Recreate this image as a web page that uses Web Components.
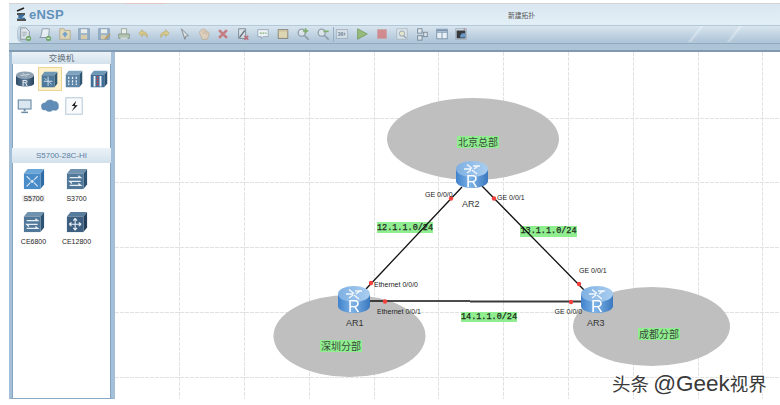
<!DOCTYPE html>
<html>
<head>
<meta charset="utf-8">
<title>eNSP</title>
<style>
  html, body { margin: 0; background: #fff; }
  body { width: 780px; height: 405px; overflow: hidden; font-family: "Liberation Sans", "Noto Sans CJK SC", sans-serif; }
  water-mark b { font: 22.500px "Liberation Sans", sans-serif; }
</style>
</head>
<body>
<ensp-app>
  <ensp-header slot="header" title-text="新建拓扑"></ensp-header>
  <ensp-toolbar slot="toolbar"></ensp-toolbar>
  <ensp-sidebar slot="side">
    <device-group title-text="交换机" tall>
      <device-item kind="router"></device-item>
      <device-item kind="switchSel" selected></device-item>
      <device-item kind="wlan"></device-item>
      <device-item kind="firewall"></device-item>
      <device-item kind="pc"></device-item>
      <device-item kind="cloud"></device-item>
      <device-item kind="link"></device-item>
    </device-group>
    <device-group title-text="S5700-28C-HI" models>
      <device-item kind="s5700" label="S5700" hilite></device-item>
      <device-item kind="s3700" label="S3700"></device-item>
      <device-item kind="ce6800" label="CE6800"></device-item>
      <device-item kind="ce12800" label="CE12800"></device-item>
    </device-group>
  </ensp-sidebar>
  <topo-canvas slot="main">
    <topo-tag x="457" y="136" w="42" h="11.5" zone>北京总部</topo-tag>
    <topo-tag x="320" y="339.5" w="42" h="12" zone>深圳分部</topo-tag>
    <topo-tag x="638" y="328" w="42" h="11.5" zone>成都分部</topo-tag>
    <topo-tag x="377" y="222" w="56" h="11">12.1.1.0/24</topo-tag>
    <topo-tag x="520" y="225.5" w="57" h="11">13.1.1.0/24</topo-tag>
    <topo-tag x="461" y="311.5" w="56" h="10.5">14.1.1.0/24</topo-tag>
    <topo-links></topo-links>
    <topo-router x="456" y="161"></topo-router>
    <topo-router x="338" y="286"></topo-router>
    <topo-router x="581" y="286"></topo-router>
    <port-label x="425" y="193.5">GE 0/0/0</port-label>
    <port-label x="497" y="197">GE 0/0/1</port-label>
    <port-label x="374" y="284">Ethernet 0/0/0</port-label>
    <port-label x="377" y="311">Ethernet 0/0/1</port-label>
    <port-label x="579" y="270">GE 0/0/1</port-label>
    <port-label x="554.5" y="311">GE 0/0/0</port-label>
    <port-label x="462" y="203.5" name>AR2</port-label>
    <port-label x="346" y="323" name>AR1</port-label>
    <port-label x="587" y="323" name>AR3</port-label>
    <water-mark x="612" y="383">头条 <b>@Geek</b>视界</water-mark>
  </topo-canvas>
</ensp-app>

<script>
const ORIGIN_X = 115, ORIGIN_Y = 52;

// 16x16 toolbar glyphs
const TOOL_ICONS = {
  newTopo: `<path d="M3 1h6l4 4v9H3z" fill="#e4e8ea" stroke="#6d7c86"/><path d="M5 6h5M5 8h5M5 10h3" stroke="#8a98a2"/><circle cx="12" cy="13" r="3" fill="#4fa52e"/><path d="M10.5 13h3" stroke="#fff"/>`,
  newPaper: `<path d="M5 2h8l-1 10H2l1.5-2z" fill="#f1f5f8" stroke="#6d8598"/><path d="M2 12h9" stroke="#6d8598"/><circle cx="12" cy="13" r="3" fill="#4fa52e"/><path d="M10.5 13h3" stroke="#fff"/>`,
  open: `<path d="M2 2h5l1 2h6v10H2z" fill="#ecd69b" stroke="#b49a5c"/><path d="M8 5l3 3-3 4-3-4z" fill="#4f93d2"/>`,
  save: `<rect x="2" y="2" width="12" height="12" fill="#7fa7cd" stroke="#6288ad"/><rect x="4.5" y="2.5" width="7" height="4.5" fill="#f4f2e6"/><rect x="4.5" y="9" width="7" height="5" fill="#e4c987"/>`,
  saveAs: `<rect x="2" y="2" width="12" height="12" fill="#7fa7cd" stroke="#6288ad"/><rect x="4.5" y="2.5" width="7" height="4.5" fill="#f4f2e6"/><rect x="4.5" y="9" width="6" height="5" fill="#e4c987"/><path d="M9 14l6-6" stroke="#c48a22" stroke-width="2"/>`,
  print: `<rect x="5" y="2" width="6" height="6" fill="#f6f6ee" stroke="#7f9a6a"/><rect x="2" y="8" width="12" height="5" fill="#a9c29a" stroke="#74866a"/><rect x="4" y="12" width="8" height="2" fill="#d8dcd4"/>`,
  undo: `<path d="M6 3L2 7l4 4V8.5c3 0 4.5.8 5.500 3.500 1-4-1-6.500-5.500-6.800z" fill="#e9c64f" stroke="#b1902f" stroke-width=".7"/>`,
  redo: `<path d="M10 3l4 4-4 4V8.500c-3 0-4.500.8-5.500 3.500-1-4 1-6.500 5.500-6.800z" fill="#e9c64f" stroke="#b1902f" stroke-width=".7"/>`,
  pointer: `<path d="M5 2l8 8-3 .5-1 3.500z" fill="#e3e5e6" stroke="#5f666c"/>`,
  hand: `<path d="M3 7V5l1.500-.5L5 3l2-1 2 1 1.500.500L11 6l2-.5L14 7l-2 7H6z" fill="#eccda6" stroke="#c39a6c" stroke-width=".8"/><path d="M7 4v4M9 4v4M11 6v3" stroke="#c39a6c" stroke-width=".7"/>`,
  del: `<path d="M3.500 3.500l9 9M12.500 3.500l-9 9" stroke="#e0585a" stroke-width="3"/>`,
  clear: `<path d="M3 2h8v11H3z" fill="#dfe5ea" stroke="#55687a"/><path d="M4 12l6-8" stroke="#3f4f5f" stroke-width="1.500"/><path d="M9.500 10l4.500 4.500M14 10l-4.500 4.500" stroke="#d9404a" stroke-width="1.800"/>`,
  note: `<path d="M2 3h12v8H8l-2 2.500V11H2z" fill="#f7fafc" stroke="#7f99ae"/><path d="M4.500 7h2M7.500 7h2M10.500 7h1.500" stroke="#55a82e" stroke-width="1.400"/>`,
  rect: `<rect x="2.500" y="3" width="11" height="10" fill="#e9d591" stroke="#6f664a"/><path d="M3 4.500h10" stroke="#c8ad63"/>`,
  zoomIn: `<circle cx="6.500" cy="6.500" r="4" fill="#dfe8ee" stroke="#7c909e" stroke-width="1.500"/><path d="M9.500 9.500l5 5" stroke="#7c909e" stroke-width="2"/><path d="M11 1.500v6M8 4.500h6" stroke="#5aa52c" stroke-width="2"/>`,
  zoomOut: `<circle cx="6.500" cy="6.500" r="4" fill="#dfe8ee" stroke="#7c909e" stroke-width="1.500"/><path d="M9.500 9.500l5 5" stroke="#7c909e" stroke-width="2"/><path d="M8.500 5h6" stroke="#5aa52c" stroke-width="2"/>`,
  cli: `<rect x="1.500" y="3" width="13" height="10" fill="#d9e1e8" stroke="#93a6b6"/><path d="M3.500 6.500h2v3h-2M7 6.500h2v3H7zM11 6.500v3" fill="none" stroke="#4c6a88"/>`,
  play: `<path d="M3 2l11 6-11 6z" fill="#7cb63f" stroke="#5c8f2b"/>`,
  stop: `<rect x="3" y="3" width="10" height="10" fill="#ee6a6c" stroke="#dc8d8d"/>`,
  capture: `<rect x="2" y="2" width="12" height="12" fill="#dde5ec" stroke="#a3b3c0"/><circle cx="8" cy="7.500" r="3" fill="#f3e9b8" stroke="#7c909e"/><path d="M10 10l3 3" stroke="#7c909e" stroke-width="1.500"/>`,
  nodes: `<rect x="3" y="2" width="5" height="5" fill="#e4ebf1" stroke="#586c7e"/><rect x="3" y="10" width="5" height="5" fill="#e4ebf1" stroke="#586c7e"/><rect x="10" y="6" width="4" height="5" fill="#e4ebf1" stroke="#586c7e"/><path d="M8 5l2 2M8 11l2-1" stroke="#586c7e"/>`,
  table: `<rect x="2" y="2.500" width="12" height="11" fill="#f4f8fb" stroke="#527ba6"/><path d="M2 6h12M8 6v7.500" stroke="#527ba6"/><path d="M2 4h12" stroke="#527ba6" stroke-width="2"/>`,
  term: `<rect x="2" y="2" width="12" height="12" fill="#d6e2ec" stroke="#8aa0b4"/><rect x="3" y="4" width="10" height="9" fill="#060606"/><path d="M7 10l2-3h4v5H7z" fill="#3b86d6"/><path d="M11 2.500h2" stroke="#e0303a"/>`
};

const boxIcon = (front, top, side, inner) => `
  <path d="M19 6l4-5v17l-4 5z" fill="${side}"/>
  <path d="M1 6l4-5h18l-4 5z" fill="${top}"/>
  <rect x="1" y="6" width="18" height="17" fill="${front}"/>
  ${inner}`;

const ARROWS = `<path d="M4 10.500h12l-2.500-2M16 14.500H4l2.500 2.500M4 19h12l-2.500-2" fill="none" stroke="#e8f0f7" stroke-width="1.400"/>`;
const CROSS = `<path d="M10 8v13M3.500 14.500h13M10 8l-2 2.500M10 8l2 2.500M10 21l-2-2.500M10 21l2-2.500M3.500 14.500l2.500-2M3.500 14.500l2.500 2M16.500 14.500l-2.500-2M16.500 14.500l-2.500 2" fill="none" stroke="#e8f0f7" stroke-width="1.200"/>`;

const DEVICE_ICONS = {
  router: `<defs><linearGradient id="gr" x1="0" x2="1"><stop offset="0" stop-color="#2e4a66"/><stop offset=".5" stop-color="#5f7f9c"/><stop offset="1" stop-color="#28425c"/></linearGradient></defs>
    <path d="M0 7v11c0 2.500 5 4 12 4s12-1.500 12-4V7z" fill="url(#gr)"/><ellipse cx="12" cy="7" rx="12" ry="5" fill="#8fa2b3"/><path d="M6 7h5M13 6h5M9 4l5 5" stroke="#e4ecf2"/><text x="12" y="21" font-size="11" text-anchor="middle" fill="#fff" font-family="Liberation Sans">R</text>`,
  switchSel: boxIcon("#4d7a9c", "#6f98b5", "#2f5672", `<path d="M10 8v13M4 14.500h12" stroke="#dfeaf2" stroke-width="1.300"/><path d="M5 10l3 3M15 19l-3-3" stroke="#dfeaf2" stroke-width="1.200"/>`),
  wlan: boxIcon("#5c85a8", "#7da3bf", "#2f5672", `<path d="M5 9v11M10 9v11M15 9v11" stroke="#eef4f8" stroke-width="1.600" stroke-dasharray="3 1.500"/>`),
  firewall: boxIcon("#3f6f99", "#6d97b6", "#2a4f70", `<path d="M6 8v14M14 8v14" stroke="#eef4f8" stroke-width="2.500"/><path d="M10 8v14" stroke="#d8404a" stroke-width="2.200" stroke-dasharray="2 1.500"/>`),
  pc: `<rect x="3" y="4" width="17" height="12" fill="#dbe7f0" stroke="#6c8ba6" stroke-width="1.500"/><path d="M11.500 16v3" stroke="#6c8ba6" stroke-width="2.500"/><path d="M7 20.500h9" stroke="#6c8ba6" stroke-width="2"/>`,
  cloud: `<path d="M1 14c-2-3 1-7 5-6 1-5 9-5 11-2 5-1 7 4 6 7 1 4-4 6-7 4-2 3-8 3-10 0-3 1-6-1-5-3z" fill="#5f8db7" stroke="#4c779e" stroke-width=".6"/>`,
  link: `<rect x="1" y="1" width="22" height="22" fill="#f8fafb" stroke="#bcd0e0" stroke-width="1.500"/><path d="M15 5l-6 7h4l-4 7 8-8h-4z" fill="#161616"/>`,
  s5700: boxIcon("#4a8cc8", "#6ba6d8", "#2f6ba4", `<path d="M4 9l4 4M16 9l-4 4M4 20l4-4M16 20l-4-4" stroke="#d3e6f5" stroke-width="1.300"/><circle cx="10" cy="14.500" r="1.800" fill="#d3e6f5"/>`),
  s3700: boxIcon("#517799", "#6f92ae", "#2d5474", ARROWS),
  ce6800: boxIcon("#517799", "#6f92ae", "#2d5474", ARROWS),
  ce12800: boxIcon("#3e5f80", "#577b9b", "#233f5c", CROSS)
};

class EnspApp extends HTMLElement {
  constructor() {
    super();
    this.attachShadow({ mode: "open" }).innerHTML = `
      <style>
        :host { display: flex; flex-direction: column; width: 771px; height: 396px; margin: 3px 0 0 9px; box-sizing: border-box; }
        .topline { height: 1px; flex: none; background: linear-gradient(90deg, #d4d4d4 115px, #e6c4c4 115px, #e6c4c4 156px, #d4d4d4 156px); }
        .band { height: 9px; flex: none; box-sizing: border-box; border-top: 1px solid #8fa9bf; border-bottom: 2px solid #7f9ab1; background: #adc3d6; }
        .body { flex: 1; display: flex; min-height: 0; }
      </style>
      <div class="topline"></div>
      <slot name="header"></slot>
      <slot name="toolbar"></slot>
      <div class="band"></div>
      <div class="body"><slot name="side"></slot><slot name="main"></slot></div>`;
  }
}

class EnspHeader extends HTMLElement {
  constructor() {
    super();
    this.attachShadow({ mode: "open" }).innerHTML = `
      <style>
        :host { display: flex; align-items: center; height: 21px; padding-left: 6px; background: linear-gradient(#d9e7f1, #e3eff6); color: #6a6a6a; }
        svg { width: 13px; height: 15px; margin-right: 1px; flex: none; filter: blur(.3px); }
        .logo { font: bold 13px "Liberation Sans", sans-serif; color: #6291ba; width: 35px; letter-spacing: .2px; }
        .title { margin-left: 444px; font: 6.750px "Noto Sans CJK SC", sans-serif; color: #555; }
      </style>
      <svg viewBox="0 0 13 15"><path d="M2 4l7-3M2 7h8" stroke="#222" stroke-width="1.600"/><path d="M3 9l6-1-5 3 6 .5" fill="none" stroke="#3a6fa0" stroke-width="1.500"/><path d="M2 13h9" stroke="#222" stroke-width="1.500"/></svg>
      <span class="logo">eNSP</span>
      <span class="title">${this.getAttribute("title-text")}</span>`;
  }
}

class EnspToolbar extends HTMLElement {
  constructor() {
    super();
    const names = Object.keys(TOOL_ICONS);
    const buttons = names.map((n, i) =>
      (i === 16 ? `<i class="sep"></i>` : "") +
      `<span class="btn"><svg viewBox="0 0 16 16" width="14" height="14">${TOOL_ICONS[n]}</svg></span>`).join("");
    this.attachShadow({ mode: "open" }).innerHTML = `
      <style>
        :host { display: block; height: 18px; background: #dfecf4; }
        .bar { display: flex; align-items: center; height: 100%; box-sizing: border-box; margin-left: 8px; border-radius: 6px 0 0 6px; border: 1px solid #b3c8d9; border-right: 0;
               background: linear-gradient(128deg, transparent 88%, rgba(255,255,255,.35) 88.300%, transparent 88.700%, transparent 93%, rgba(255,255,255,.35) 93.300%, transparent 93.700%), linear-gradient(#d8e5ef, #aec4d7); }
        .btn { width: 19.850px; flex: none; display: flex; justify-content: center; }
        .btn:first-child { margin-left: -3px; }
        .sep { width: 1px; height: 15px; margin-right: -1px; flex: none; background: #95aec3; }
        svg { filter: saturate(.75) opacity(.75) blur(.35px); }
      </style>
      <div class="bar">${buttons}</div>`;
  }
}

class EnspSidebar extends HTMLElement {
  constructor() {
    super();
    this.attachShadow({ mode: "open" }).innerHTML = `
      <style>
        :host { display: flex; flex-direction: column; width: 106px; flex: none; box-sizing: border-box; background: #fff; border-left: 3px solid #a4bfd8; border-right: 4px solid #a4bfd8; border-bottom: 1px solid #8aa9c4; box-shadow: inset 1px 0 #86a5c2, inset -1px 0 #86a5c2; }
      </style>
      <slot></slot>`;
  }
}

class DeviceGroup extends HTMLElement {
  constructor() {
    super();
    const models = this.hasAttribute("models");
    this.attachShadow({ mode: "open" }).innerHTML = `
      <style>
        :host { display: block; height: ${this.hasAttribute("tall") ? 96 : 150}px; }
        .head { height: ${models ? 15 : 12}px; line-height: ${models ? 15 : 12}px; text-align: center; font-size: ${models ? 8 : 8.500}px;
                color: ${models ? "#5b80a3" : "#5d6b78"}; background: linear-gradient(#ebf2f7, #d3e1ec); font-family: "Liberation Sans", "Noto Sans CJK SC", sans-serif; }
        .list { display: grid; grid-template-columns: repeat(${models ? 2 : 4}, ${models ? "43px" : "24.500px"}); grid-auto-rows: ${models ? "43px" : "27px"};
                padding: ${models ? "5px 0 0 0" : "4px 0 0 1px"}; }
      </style>
      <div class="head">${this.getAttribute("title-text")}</div>
      <div class="list"><slot></slot></div>`;
  }
}

class DeviceItem extends HTMLElement {
  constructor() {
    super();
    const label = this.getAttribute("label");
    const sel = this.hasAttribute("selected");
    const size = sel ? 17 : (label ? 22 : 18);
    this.attachShadow({ mode: "open" }).innerHTML = `
      <style>
        :host { display: flex; flex-direction: column; align-items: center; }
        .ico { display: flex; width: 22px; height: 22px; box-sizing: border-box; justify-content: center; align-items: center; ${sel ? "background:#fdf1cc;outline:1px solid #efd595;" : ""} }
        svg { filter: blur(.3px); }
        .txt { font: 7px "Liberation Sans", sans-serif; color: #1d1d1d; margin-top: 5px; padding: 0 1px; ${this.hasAttribute("hilite") ? "background:#eeeeee;" : ""} }
      </style>
      <span class="ico"><svg viewBox="0 0 24 24" width="${size}" height="${size}">${DEVICE_ICONS[this.getAttribute("kind")]}</svg></span>
      ${label ? `<span class="txt">${label}</span>` : ""}`;
  }
}

class TopoCanvas extends HTMLElement {
  constructor() {
    super();
    const xs = [179.5, 244.5, 309.5, 374.5, 438.5, 503.5, 568.5, 633.5, 698.5, 762.5];
    const ys = [118.5, 182.5, 247.5, 312.5, 377.5];
    const grid = xs.map(x => `<path d="M${x} 52V399"/>`).join("") + ys.map(y => `<path d="M115 ${y}H780"/>`).join("");
    this.attachShadow({ mode: "open" }).innerHTML = `
      <style>
        :host { display: block; position: relative; flex: 1; background: #fff; overflow: visible; }
        svg { position: absolute; left: 0; top: 0; }
      </style>
      <svg width="665" height="347" viewBox="115 52 665 347">
        <g stroke="#e2e2e2" fill="none" stroke-dasharray="4 1">${grid}</g>
        <g fill="#bfbfbf">
          <ellipse cx="473" cy="139" rx="86" ry="41"/>
          <ellipse cx="349.500" cy="336" rx="76" ry="41"/>
          <ellipse cx="651.500" cy="326.500" rx="78.500" ry="39.500"/>
        </g>
      </svg>
      <slot></slot>`;
  }
}

// free canvas items: page coordinates come in through x / y
class CanvasItem extends HTMLElement {
  connectedCallback() {
    this.style.left = (this.getAttribute("x") - ORIGIN_X) + "px";
    this.style.top = (this.getAttribute("y") - ORIGIN_Y) + "px";
  }
}

class TopoLinks extends HTMLElement {
  constructor() {
    super();
    const dots = [[451, 198.5], [494, 198.5], [371, 283], [579, 284], [385, 301.5], [571, 302]];
    this.attachShadow({ mode: "open" }).innerHTML = `
      <style>:host { position: absolute; left: 0; top: 0; display: block; } svg { display: block; }</style>
      <svg width="665" height="347" viewBox="115 52 665 347">
        <g stroke="#111" stroke-width="1.300" fill="none">
          <path d="M462 187L366 289"/>
          <path d="M482 186L585 291"/>
          <path d="M369 301H470" stroke-width="1.500"/>
          <path d="M470 301.500H581" stroke="#3a3a3a" stroke-width="2"/>
        </g>
        <g fill="#f4403c">${dots.map(d => `<circle cx="${d[0]}" cy="${d[1]}" r="2.200"/>`).join("")}</g>
      </svg>`;
  }
}

class TopoRouter extends CanvasItem {
  constructor() {
    super();
    this.attachShadow({ mode: "open" }).innerHTML = `
      <style>:host { position: absolute; display: block; width: 32px; height: 27px; } svg { display: block; filter: blur(.25px); }</style>
      <svg width="32" height="33" viewBox="0 0 32 33">
        <defs>
          <linearGradient id="side" x1="0" x2="1"><stop offset="0" stop-color="#3f82cc"/><stop offset=".45" stop-color="#7cb2e6"/><stop offset="1" stop-color="#3b78bf"/></linearGradient>
          <linearGradient id="top" x1="0" x2="1"><stop offset="0" stop-color="#7fb0e2"/><stop offset="1" stop-color="#a9cdf0"/></linearGradient>
        </defs>
        <path d="M0 8v12c0 4 7 7 16 7s16-3 16-7V8z" fill="url(#side)"/>
        <ellipse cx="16" cy="8" rx="16" ry="8" fill="url(#top)"/>
        <path d="M8 8h7M17 5h7M11 3.500l5 4M16 9l5 4M11 12l4-3M18 8l4-3" stroke="#f2f7fc" stroke-width="1.500"/>
        <text x="16" y="26" font-size="16.500" text-anchor="middle" fill="#fff" font-family="Liberation Sans">R</text>
      </svg>`;
  }
}

class TopoTag extends CanvasItem {
  constructor() {
    super();
    const zone = this.hasAttribute("zone");
    this.attachShadow({ mode: "open" }).innerHTML = `
      <style>
        :host { position: absolute; display: flex; align-items: center; justify-content: center; white-space: nowrap; background: #90ee90; color: ${zone ? "#3a4a3a" : "#1d2a1d"};
                width: ${this.getAttribute("w")}px; height: ${this.getAttribute("h")}px;
                -webkit-text-stroke: ${zone ? 0 : ".25px"};
                font: ${zone ? '10px "Noto Sans CJK SC", sans-serif' : '8.500px "Liberation Mono", monospace'}; }
      </style>
      <slot></slot>`;
  }
}

class PortLabel extends CanvasItem {
  constructor() {
    super();
    const name = this.hasAttribute("name");
    this.attachShadow({ mode: "open" }).innerHTML = `
      <style>
        :host { position: absolute; display: block; white-space: nowrap; transform: translateY(-50%); line-height: 1; color: ${name ? "#333" : "#222"}; font: ${name ? 9 : 7}px "Liberation Sans", sans-serif; }
      </style>
      <slot></slot>`;
  }
}

class WaterMark extends CanvasItem {
  constructor() {
    super();
    this.attachShadow({ mode: "open" }).innerHTML = `
      <style>
        :host { position: absolute; display: block; white-space: nowrap; transform: translateY(-50%); color: #3a3a3a; font: 18.500px "Noto Sans CJK SC", sans-serif; text-shadow: 1px 1px 0 #fff, -1px -1px 0 #fff, 1px -1px 0 #fff, -1px 1px 0 #fff; }
      </style>
      <slot></slot>`;
  }
}

customElements.define("ensp-app", EnspApp);
customElements.define("ensp-header", EnspHeader);
customElements.define("ensp-toolbar", EnspToolbar);
customElements.define("ensp-sidebar", EnspSidebar);
customElements.define("device-group", DeviceGroup);
customElements.define("device-item", DeviceItem);
customElements.define("topo-canvas", TopoCanvas);
customElements.define("topo-links", TopoLinks);
customElements.define("topo-router", TopoRouter);
customElements.define("topo-tag", TopoTag);
customElements.define("port-label", PortLabel);
customElements.define("water-mark", WaterMark);
</script>
</body>
</html>
